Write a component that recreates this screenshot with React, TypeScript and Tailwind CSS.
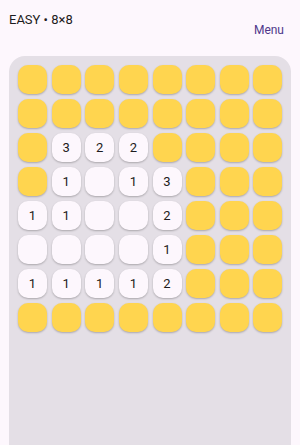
import React from "react";

// Y = covered tile, "" = opened empty, digits = opened with count
const board: string[][] = [
  ["Y", "Y", "Y", "Y", "Y", "Y", "Y", "Y"],
  ["Y", "Y", "Y", "Y", "Y", "Y", "Y", "Y"],
  ["Y", "3", "2", "2", "Y", "Y", "Y", "Y"],
  ["Y", "1", "", "1", "3", "Y", "Y", "Y"],
  ["1", "1", "", "", "2", "Y", "Y", "Y"],
  ["", "", "", "", "1", "Y", "Y", "Y"],
  ["1", "1", "1", "1", "2", "Y", "Y", "Y"],
  ["Y", "Y", "Y", "Y", "Y", "Y", "Y", "Y"],
];

function Tile({ v }: { v: string }) {
  if (v === "Y") {
    return (
      <div className="h-[29px] w-[29px] rounded-[10px] bg-[#ffd54f] shadow-[0_1px_2px_rgba(0,0,0,0.25)]" />
    );
  }
  return (
    <div className="flex h-[29px] w-[29px] items-center justify-center rounded-[10px] bg-[#fdf7fd] text-[13px] text-[#1d1b20] shadow-[0_1px_2px_rgba(0,0,0,0.25)]">
      {v}
    </div>
  );
}

export default function App() {
  return (
    <div
      className="flex h-[445px] w-[300px] flex-col overflow-hidden bg-[#fdf7fd]"
      style={{ fontFamily: "Roboto, 'Noto Sans', sans-serif" }}
    >
      <div className="flex items-start justify-between pl-[9px] pr-[16px] pt-[10px]">
        <span className="text-[13px] leading-5 text-[#1d1b20]">EASY • 8×8</span>
        <span className="mt-[12px] text-[12px] leading-4 text-[#4f378b]">Menu</span>
      </div>
      <div className="mx-[9px] mt-[18px] flex-1 rounded-t-[16px] bg-[#e4dfe6] px-[9px] pt-[9px]">
        <div className="grid grid-cols-8 gap-[5px]">
          {board.map((row, r) =>
            row.map((v, c) => <Tile key={`${r}-${c}`} v={v} />)
          )}
        </div>
      </div>
    </div>
  );
}
